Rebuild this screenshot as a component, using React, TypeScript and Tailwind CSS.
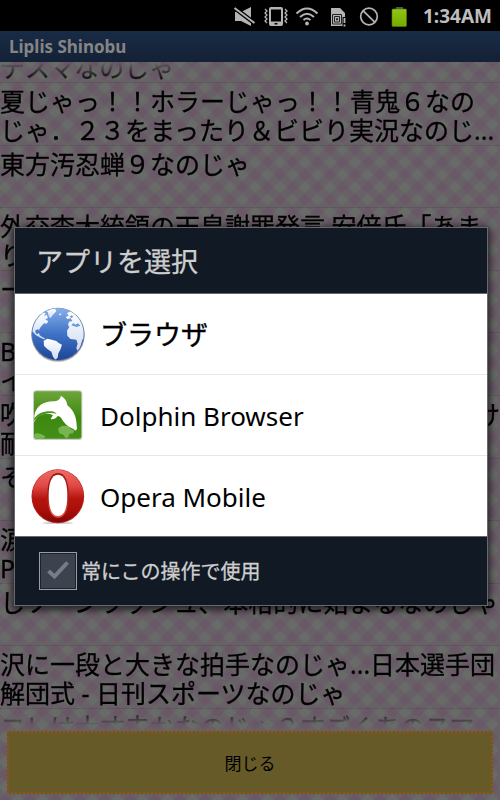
import type { ReactNode } from "react";

const feed: string[][] = [
  ["夏じゃっ！！ホラーじゃっ！！青鬼６なの", "じゃ．２３をまったり＆ビビり実況なのじ..."],
  ["東方汚忍蝉９なのじゃ"],
  ["外交李大統領の天皇謝罪発言 安倍氏「あま", "り"],
  ["ー"],
  ["B", "イ"],
  ["吹|け", "耐"],
  ["そ"],
  ["涙", "P"],
  ["しソーンラッシュ、本格的に始まるなのじゃ"],
  ["沢に一段と大きな拍手なのじゃ...日本選手団", "解団式 - 日刊スポーツなのじゃ"],
];

function StatusIcon({ label, children }: { label: string; children: ReactNode }) {
  return (
    <svg role="img" aria-label={label} width="24" height="22" viewBox="0 0 24 22" fill="none" stroke="#b4b4b4">
      {children}
    </svg>
  );
}

function StatusBar() {
  return (
    <div className="flex h-[31px] shrink-0 items-center justify-end gap-[7px] bg-black pr-2">
      <StatusIcon label="Muted">
        <path d="M2 7H8L18 2V21L8 16H2Z" fill="#b4b4b4" stroke="none" />
        <path d="M1 2.500L22 18.500" stroke="#000" strokeWidth="4.500" />
        <path d="M1.500 3L21.500 18" strokeWidth="2" />
      </StatusIcon>
      <StatusIcon label="Vibrate">
        <rect x="5" y="2" width="14" height="19" rx="2" fill="#b4b4b4" stroke="none" />
        <rect x="7" y="4.500" width="10" height="12" fill="#000" stroke="none" />
        <rect x="10.500" y="18" width="3" height="1.500" fill="#000" stroke="none" />
        <path d="M1 4L3 6L1 8L3 10L1 12L3 14L1 16L3 18M21 4L23 6L21 8L23 10L21 12L23 14L21 16L23 18" strokeWidth="1.300" />
      </StatusIcon>
      <StatusIcon label="Wi-Fi">
        <path d="M1.500 8.500Q12 -1.500 22.500 8.500M5 12Q12 5.500 19 12M8.500 15Q12 12 15.500 15" strokeWidth="2" />
        <circle cx="12" cy="18.500" r="1.900" fill="#b4b4b4" stroke="none" />
      </StatusIcon>
      <StatusIcon label="No SIM card">
        <path d="M5 3H14L19 8V12H16.500V21H5Z" fill="#b4b4b4" stroke="none" />
        <path d="M6.500 9.500H15.500V19H6.500ZM8.500 11.500H13.500V17H8.500ZM10.500 13.500H11.500V15H10.500Z" stroke="#222" />
        <path d="M18.500 13V18M18.500 19.500V21.500" strokeWidth="1.800" />
      </StatusIcon>
      <StatusIcon label="No service">
        <circle cx="12" cy="11.500" r="8.300" strokeWidth="1.700" />
        <path d="M6.300 5.800L17.700 17.200" strokeWidth="1.700" />
      </StatusIcon>
      <StatusIcon label="Battery">
        <defs>
          <linearGradient id="battery" x2="0" y2="1">
            <stop stopColor="#8fc614" />
            <stop offset="1" stopColor="#76a800" />
          </linearGradient>
        </defs>
        <rect x="8" y="2" width="7" height="3" fill="#555" stroke="none" />
        <rect x="4" y="4" width="14.500" height="17.500" rx="1" fill="url(#battery)" stroke="#5b7c10" strokeWidth=".6" />
      </StatusIcon>
      <time className="ml-1 pt-0.5 text-[19px] leading-none font-bold text-[#bdbdbd]">1:34AM</time>
    </div>
  );
}

function Globe() {
  return (
    <svg aria-hidden="true" width="54" height="54" viewBox="92 53 162 162" className="shrink-0 overflow-visible">
      <defs>
        <linearGradient id="sea" x2="0" y2="1">
          <stop stopColor="#86b0ea" />
          <stop offset=".5" stopColor="#3f72c6" />
          <stop offset="1" stopColor="#1c4596" />
        </linearGradient>
        <linearGradient id="land" x2="0" y2="1">
          <stop stopColor="#fff" />
          <stop offset="1" stopColor="#cfdcf3" />
        </linearGradient>
        <clipPath id="world">
          <circle cx="173" cy="134" r="77" />
        </clipPath>
      </defs>
      <circle cx="173" cy="138" r="80" fill="#777" opacity=".45" />
      <circle cx="173" cy="135" r="80" fill="#7c8494" />
      <circle cx="173" cy="134" r="78" fill="url(#sea)" />
      <g clipPath="url(#world)" fill="url(#land)">
        <path d="M90 80L122 66L136 72L130 80L139 76L143 86L135 90L144 96L139 103L131 102L121 113L116 121L119 126L113 120L105 123L106 132L112 134L116 130L118 138L126 143L135 148L130 150L118 144L106 137L98 128L90 124Z" />
        <path d="M130 154L141 148L154 151L168 155L175 161L185 166L180 181L174 192L172 205L165 211L158 202L153 187L140 178L131 169Z" />
        <path d="M142 66L152 58L164 57L168 66L158 76L150 87L145 80ZM136 64L146 59L142 68ZM176 74L183 72L182 77L176 78Z" />
        <path d="M200 72L213 64L238 78L254 108V145L246 151L238 180L232 186L228 176L232 163L228 151L210 149L201 139L200 124L207 113L203 106L206 97L216 95L211 87L201 89L196 83L205 79Z" />
        <path d="M213 108L229 113L240 109L233 102L225 106L219 101Z" fill="#6a98dc" />
        <path d="M214 78L219 82L213 86L208 82Z" fill="#6a98dc" />
      </g>
    </svg>
  );
}

function Dolphin() {
  return (
    <svg aria-hidden="true" width="54" height="54" viewBox="92 56 162 162" className="shrink-0 overflow-visible">
      <defs>
        <linearGradient id="green" x2="0" y2="1">
          <stop stopColor="#6da53a" />
          <stop offset=".55" stopColor="#3d8910" />
          <stop offset="1" stopColor="#438e17" />
        </linearGradient>
      </defs>
      <rect x="98" y="63" width="148" height="149" rx="10" fill="#c6cec0" />
      <rect x="101" y="66" width="142" height="142" rx="8" fill="url(#green)" />
      <path d="M173 178L184 170L203 169L212 180L222 184L218 192L207 193L204 204L196 207L190 197L177 192ZM101 196L109 191L122 194L135 201L131 208H107L101 204Z" fill="#77b550" />
      <path d="M102 138C107 110 130 96 158 96C170 96 181 91 181 79C193 85 200 95 201 108C216 119 226 137 228 157L230 178L226 184L218 178C204 174 191 162 183 147C181 143 177 140 172 140C166 148 158 151 151 149L158 138C146 131 130 133 120 138C111 142 105 149 102 160Z" fill="#fff" />
      <path d="M102 147C112 132 130 125 152 126C160 127 165 129 169 133C148 128 122 131 102 154Z" fill="#4a941f" />
    </svg>
  );
}

function Opera() {
  return (
    <svg aria-hidden="true" width="54" height="54" viewBox="92 297 162 162" className="shrink-0 overflow-visible">
      <defs>
        <linearGradient id="ring" x2="0" y2="1">
          <stop stopColor="#ee6b66" />
          <stop offset=".3" stopColor="#e04a46" />
          <stop offset=".55" stopColor="#b5150f" />
          <stop offset=".8" stopColor="#a80d08" />
          <stop offset="1" stopColor="#7c0806" />
        </linearGradient>
        <linearGradient id="rim" x2="0" y2="1">
          <stop stopColor="#9c120d" />
          <stop offset=".5" stopColor="#a5150f" />
          <stop offset="1" stopColor="#e85a50" />
        </linearGradient>
      </defs>
      <ellipse cx="172" cy="459" rx="46" ry="3" fill="#ccc" />
      <ellipse cx="172.500" cy="379" rx="79" ry="81" fill="#b8201b" />
      <ellipse cx="172.500" cy="378" rx="77" ry="79" fill="url(#ring)" />
      <path d="M173 309C195 309 205 336 205 376S195 443 173 443S141 416 141 376S151 309 173 309Z" fill="url(#rim)" />
      <path d="M173 314C193 314 201 340 201 376S193 438 173 438S145 412 145 376S153 314 173 314Z" fill="#fff" />
    </svg>
  );
}

const apps = [
  { name: "ブラウザ", icon: <Globe />, text: "text-[27px] [-webkit-text-stroke:0.4px_#000]" },
  { name: "Dolphin Browser", icon: <Dolphin />, text: "text-[26px]" },
  { name: "Opera Mobile", icon: <Opera />, text: "text-[26px]" },
];

function Chooser() {
  return (
    <div className="absolute inset-x-0 top-8 bottom-0 flex items-center pr-3 pl-3.5">
      <section
        role="dialog"
        aria-labelledby="chooser-title"
        className="w-full border border-[#66696d] bg-[#111925] shadow-[0_2px_7px_2px_rgba(0,0,0,0.65)]"
      >
        <h2
          id="chooser-title"
          className="flex h-[66px] items-center border-b border-[#66696d] pt-1 pl-[21px] text-[27px] text-[#cecece] [-webkit-text-stroke:0.3px_#cecece]"
        >
          アプリを選択
        </h2>
        <ul className="divide-y divide-[#e6e6e6] bg-white">
          {apps.map((app) => (
            <li key={app.name}>
              <button className="flex h-20 w-full items-center gap-[15px] pt-px pl-4 text-left text-black">
                {app.icon}
                <span className={`pt-0.5 ${app.text}`}>{app.name}</span>
              </button>
            </li>
          ))}
        </ul>
        <div className="flex h-[69px] items-center gap-1 border-t border-[#66696d] pl-6">
          <span className="relative size-[38px] shrink-0">
            <input
              id="always"
              type="checkbox"
              className="block size-full appearance-none border border-[#9a9c9f] bg-[#3c434e] shadow-[inset_0_0_0_1px_#1c222c]"
            />
            <svg aria-hidden="true" className="pointer-events-none absolute inset-0" width="38" height="38" viewBox="0 0 38 38" fill="none" stroke="#777d86" strokeWidth="4">
              <path d="M9.500 19L15.500 24.500L28.500 10.500" />
            </svg>
          </span>
          <label htmlFor="always" className="pt-0.5 text-[20px] text-[#cecece] [-webkit-text-stroke:0.3px_#cecece]">
            常にこの操作で使用
          </label>
        </div>
      </section>
    </div>
  );
}

export default function App() {
  return (
    <main
      lang="ja"
      className="relative flex h-screen flex-col overflow-hidden bg-[#686b68] bg-[linear-gradient(45deg,rgba(106,70,102,0.14),rgba(106,70,102,0.28)_3%_22%,transparent_28%_47%,rgba(106,70,102,0.28)_53%_72%,transparent_78%_97%,rgba(106,70,102,0.14)),linear-gradient(-45deg,rgba(106,70,102,0.14),rgba(106,70,102,0.28)_3%_22%,transparent_28%_47%,rgba(106,70,102,0.28)_53%_72%,transparent_78%_97%,rgba(106,70,102,0.14))] bg-[length:25px_25px] bg-[position:5px_6px] font-['Noto_Sans','Noto_Sans_CJK_JP',sans-serif]"
    >
      <StatusBar />
      <header className="flex h-[31px] shrink-0 items-center bg-linear-to-b from-[#192c45] to-[#142136] pl-[9px]">
        <h1 className="text-[17px] leading-none font-bold text-[#858585]">Liplis Shinobu</h1>
      </header>
      <ul className="flex min-h-0 flex-1 flex-col overflow-hidden [mask-image:linear-gradient(to_bottom,transparent,black_20px,black_calc(100%-16px),transparent)] text-[25px] leading-[29px] whitespace-nowrap text-black [-webkit-text-stroke:0.3px_#000]">
        <li className="flex h-[21px] shrink-0 flex-col justify-end border-b border-black/10">テスマなのじゃ</li>
        {feed.map((lines, i) => (
          <li key={i} className="min-h-0 flex-1 border-b border-black/10 pt-1">
            {lines.map((line) => (
              <p key={line} className="flex justify-between whitespace-pre">
                {line.split("|").map((part) => (
                  <span key={part}>{part}</span>
                ))}
              </p>
            ))}
          </li>
        ))}
        <li className="h-4 shrink-0 pt-1">コレは大丈夫かなのじゃ？すごくあのスマ</li>
      </ul>
      <footer className="shrink-0 px-[7px] pt-1.5 pb-1.5">
        <button className="h-[63px] w-full border-2 border-dotted border-[#96501a] bg-[#665a28] pt-0.5 text-[17px] text-black">
          閉じる
        </button>
      </footer>
      <Chooser />
    </main>
  );
}
